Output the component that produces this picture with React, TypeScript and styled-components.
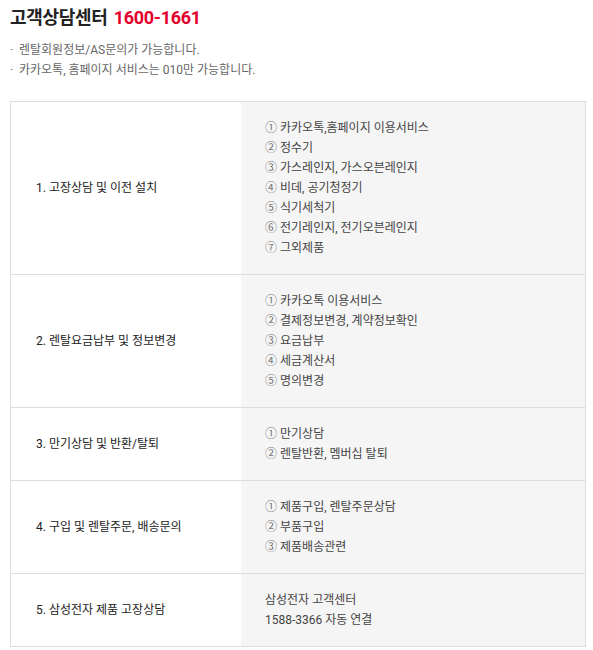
import React from 'react';
import styled, {createGlobalStyle} from 'styled-components';

const GlobalStyle = createGlobalStyle`
    body {
        margin: 0;
        background: #fff;
        font-family: Roboto, 'Noto Sans CJK KR', sans-serif;
        color: #333;
    }
`;

const Page = styled.div`
    padding: 6px 8px 0 10px;
`;

const Title = styled.h2`
    margin: 0;
    font-size: 18px;
    font-weight: 700;
    line-height: 24px;
    color: #222;
    letter-spacing: -0.3px;
`;

const Phone = styled.span`
    color: #e4002b;
    margin-left: 2px;
`;

const Notes = styled.ul`
    list-style: none;
    margin: 10px 0 0;
    padding: 0;
`;

const Note = styled.li`
    position: relative;
    padding-left: 9px;
    font-size: 12px;
    line-height: 20px;
    color: #666;

    &::before {
        content: '·';
        position: absolute;
        left: 0;
        top: 0;
        color: #666;
    }
`;

const Table = styled.div`
    margin-top: 21px;
    width: 576px;
    box-sizing: border-box;
    border: 1px solid #ddd;
    border-bottom: none;
`;

const Row = styled.div`
    display: grid;
    grid-template-columns: 230px 1fr;
    border-bottom: 1px solid #ddd;
`;

const Label = styled.div`
    display: flex;
    align-items: center;
    padding: 16px 0 16px 25px;
    font-size: 12px;
    line-height: 20px;
    color: #222;
`;

const Detail = styled.div`
    display: flex;
    flex-direction: column;
    justify-content: center;
    padding: 16px 0 16px 24px;
    background: #f5f5f5;
    font-size: 12px;
    line-height: 20px;
    color: #444;
`;

const Item = styled.div`
    white-space: nowrap;
`;

const Num = styled.span`
    color: #777;
    margin-right: 3px;
`;

const marks = ['①', '②', '③', '④', '⑤', '⑥', '⑦'];

const rows: {label: string; items: string[]; plain?: boolean}[] = [
    {
        label: '1. 고장상담 및 이전 설치',
        items: ['카카오톡,홈페이지 이용서비스', '정수기', '가스레인지, 가스오븐레인지', '비데, 공기청정기', '식기세척기', '전기레인지, 전기오븐레인지', '그외제품'],
    },
    {
        label: '2. 렌탈요금납부 및 정보변경',
        items: ['카카오톡 이용서비스', '결제정보변경, 계약정보확인', '요금납부', '세금계산서', '명의변경'],
    },
    {label: '3. 만기상담 및 반환/탈퇴', items: ['만기상담', '렌탈반환, 멤버십 탈퇴']},
    {label: '4. 구입 및 렌탈주문, 배송문의', items: ['제품구입, 렌탈주문상담', '부품구입', '제품배송관련']},
    {label: '5. 삼성전자 제품 고장상담', items: ['삼성전자 고객센터', '1588-3366 자동 연결'], plain: true},
];

export default () => {
    return (
        <Page>
            <GlobalStyle />
            <Title>
                고객상담센터 <Phone>1600-1661</Phone>
            </Title>
            <Notes>
                <Note>렌탈회원정보/AS문의가 가능합니다.</Note>
                <Note>카카오톡, 홈페이지 서비스는 010만 가능합니다.</Note>
            </Notes>
            <Table>
                {rows.map(row => (
                    <Row key={row.label}>
                        <Label>{row.label}</Label>
                        <Detail>
                            {row.items.map((item, i) => (
                                <Item key={item}>
                                    {!row.plain && <Num>{marks[i]}</Num>}
                                    {item}
                                </Item>
                            ))}
                        </Detail>
                    </Row>
                ))}
            </Table>
        </Page>
    );
};
